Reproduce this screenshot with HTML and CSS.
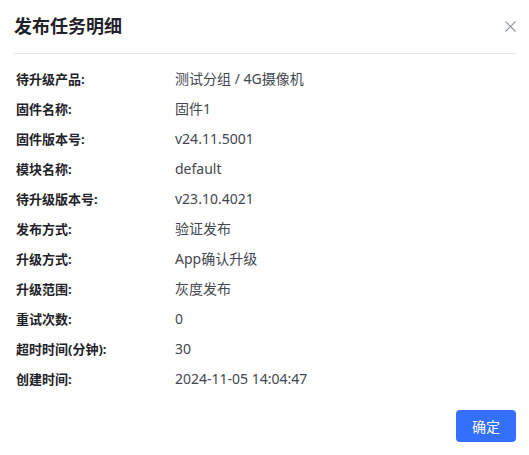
FILE: index.html
```html
<!DOCTYPE html>
<html lang="zh-CN">
<head>
<meta charset="utf-8">
<link rel="stylesheet" href="styles.css">
</head>
<body>
<div class="dialog">
  <div class="header">
    <h1 class="title">发布任务明细</h1>
    <span class="close" aria-label="关闭">
      <svg width="11" height="11" viewBox="0 0 11 11"><path d="M0.5 0.5L10.5 10.5M10.5 0.5L0.5 10.5" stroke="#8f959e" stroke-width="1.1" fill="none"/></svg>
    </span>
  </div>
  <div class="body">
    <div class="row"><span class="label">待升级产品:</span><span class="value">测试分组 / 4G摄像机</span></div>
    <div class="row"><span class="label">固件名称:</span><span class="value">固件1</span></div>
    <div class="row"><span class="label">固件版本号:</span><span class="value">v24.11.5001</span></div>
    <div class="row"><span class="label">模块名称:</span><span class="value">default</span></div>
    <div class="row"><span class="label">待升级版本号:</span><span class="value">v23.10.4021</span></div>
    <div class="row"><span class="label">发布方式:</span><span class="value">验证发布</span></div>
    <div class="row"><span class="label">升级方式:</span><span class="value">App确认升级</span></div>
    <div class="row"><span class="label">升级范围:</span><span class="value">灰度发布</span></div>
    <div class="row"><span class="label">重试次数:</span><span class="value">0</span></div>
    <div class="row"><span class="label">超时时间(分钟):</span><span class="value">30</span></div>
    <div class="row"><span class="label">创建时间:</span><span class="value">2024-11-05 14:04:47</span></div>
  </div>
  <div class="footer">
    <button class="btn-primary">确定</button>
  </div>
</div>
</body>
</html>
```
FILE: styles.css
```css
html, body {
  margin: 0;
  padding: 0;
  background: #ffffff;
}
body {
  font-family: "Segoe UI", "Noto Sans", "Noto Sans CJK SC", sans-serif;
  color: #1f2329;
}
.dialog {
  width: 529px;
  height: 455px;
  box-sizing: border-box;
  padding: 0 13px 0 14px;
}
.header {
  height: 54px;
  display: flex;
  align-items: center;
  justify-content: space-between;
  border-bottom: 1px solid #e5e6eb;
  box-sizing: border-box;
}
.title {
  margin: 0 0 1px 0;
  font-size: 18px;
  font-weight: 700;
  line-height: 24px;
  color: #1f2329;
}
.close {
  display: flex;
  width: 11px;
  height: 11px;
}
.body {
  padding: 9px 0 0 2px;
}
.row {
  display: flex;
  align-items: center;
  height: 30px;
}
.label {
  width: 159px;
  flex: none;
  font-size: 13px;
  font-weight: 700;
  color: #1f2329;
}
.value {
  font-size: 14px;
  color: #43474f;
}
.footer {
  display: flex;
  justify-content: flex-end;
  padding-top: 17px;
}
.btn-primary {
  width: 60px;
  height: 32px;
  border: none;
  border-radius: 4px;
  background: #3370ff;
  color: #ffffff;
  font-family: inherit;
  font-size: 14px;
  padding: 0;
}
```
